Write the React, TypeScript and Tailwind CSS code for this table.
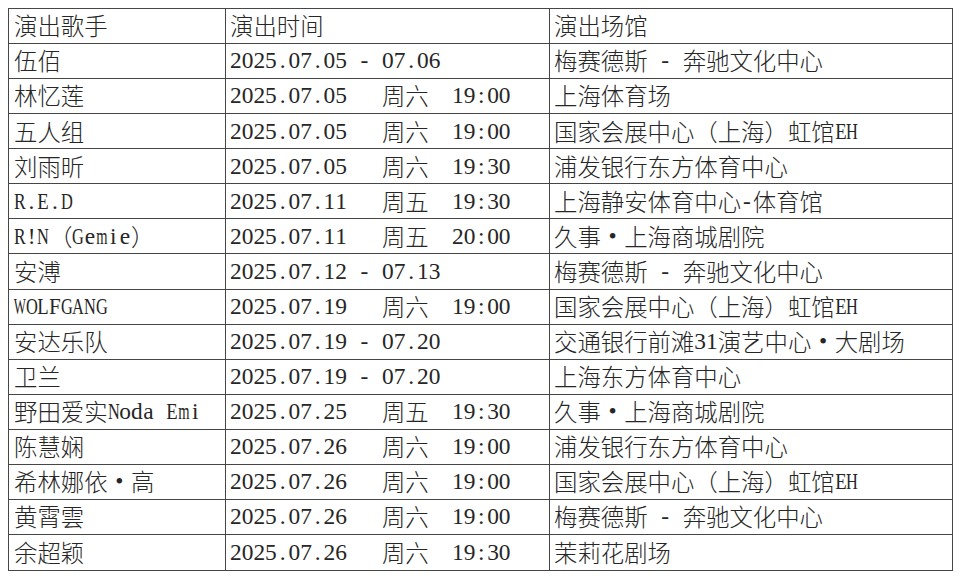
import React from 'react';

// 每行: 歌手, 时间, 场馆
const rows: [string, string, string][] = [
  ['演出歌手', '演出时间', '演出场馆'],
  ['伍佰', '2025.07.05 - 07.06', '梅赛德斯 - 奔驰文化中心'],
  ['林忆莲', '2025.07.05   周六  19:00', '上海体育场'],
  ['五人组', '2025.07.05   周六  19:00', '国家会展中心（上海）虹馆EH'],
  ['刘雨昕', '2025.07.05   周六  19:30', '浦发银行东方体育中心'],
  ['R.E.D', '2025.07.11   周五  19:30', '上海静安体育中心-体育馆'],
  ['R!N（Gemie）', '2025.07.11   周五  20:00', '久事•上海商城剧院'],
  ['安溥', '2025.07.12 - 07.13', '梅赛德斯 - 奔驰文化中心'],
  ['WOLFGANG', '2025.07.19   周六  19:00', '国家会展中心（上海）虹馆EH'],
  ['安达乐队', '2025.07.19 - 07.20', '交通银行前滩31演艺中心•大剧场'],
  ['卫兰', '2025.07.19 - 07.20', '上海东方体育中心'],
  ['野田爱实Noda Emi', '2025.07.25   周五  19:30', '久事•上海商城剧院'],
  ['陈慧娴', '2025.07.26   周六  19:00', '浦发银行东方体育中心'],
  ['希林娜依•高', '2025.07.26   周六  19:00', '国家会展中心（上海）虹馆EH'],
  ['黄霄雲', '2025.07.26   周六  19:00', '梅赛德斯 - 奔驰文化中心'],
  ['余超颖', '2025.07.26   周六  19:30', '茉莉花剧场'],
];

// 宽字母压窄, 模仿宋体的半角字
const squeeze: Record<string, string> = {
  W: 'scale-x-[0.55]',
  M: 'scale-x-[0.58]',
  m: 'scale-x-[0.62]',
  O: 'scale-x-[0.7]',
  G: 'scale-x-[0.7]',
  A: 'scale-x-[0.7]',
  N: 'scale-x-[0.7]',
  D: 'scale-x-[0.7]',
  H: 'scale-x-[0.7]',
  R: 'scale-x-[0.75]',
  L: 'scale-x-[0.8]',
  E: 'scale-x-[0.8]',
  F: 'scale-x-[0.9]',
};

const latin = "inline-flex justify-center w-[0.5em] [font-family:'Liberation_Serif',serif]";

const Txt: React.FC<{ s: string }> = ({ s }) => {
  const out: React.ReactNode[] = [];
  let buf = '';
  const flush = () => {
    if (buf) {
      out.push(
        <span key={out.length} className="[font-family:'Noto_Sans_CJK_SC',sans-serif] font-light">
          {buf}
        </span>
      );
      buf = '';
    }
  };
  for (const c of s) {
    if (c === '•') {
      flush();
      out.push(
        <span key={out.length} className="inline-flex justify-center w-[1em] [font-family:'Liberation_Serif',serif]">
          •
        </span>
      );
    } else if (c.charCodeAt(0) >= 0x2e80) {
      buf += c;
    } else {
      flush();
      out.push(
        <span key={out.length} className={latin + ' ' + (squeeze[c] || '')}>
          {c === ' ' ? '\u00a0' : c}
        </span>
      );
    }
  }
  flush();
  return <>{out}</>;
};

export default function App() {
  return (
    <div className="w-[960px] h-[580px] bg-white pt-[8px] pl-[8px]">
      <div className="w-[945px] h-[563px] border border-[#464646] grid grid-cols-[217px_324px_1fr] grid-rows-[repeat(16,minmax(0,1fr))] text-[23.4px] leading-none text-[#262626]">
        {rows.map((r, i) => {
          const last = i === rows.length - 1;
          return (
            <React.Fragment key={i}>
              <div className={`flex items-center pl-[5px] border-r border-[#464646] whitespace-nowrap ${last ? '' : 'border-b'}`}>
                <Txt s={r[0]} />
              </div>
              <div className={`flex items-center pl-[4px] border-r border-[#464646] whitespace-nowrap ${last ? '' : 'border-b'}`}>
                <Txt s={r[1]} />
              </div>
              <div className={`flex items-center pl-[4px] border-[#464646] whitespace-nowrap ${last ? '' : 'border-b'}`}>
                <Txt s={r[2]} />
              </div>
            </React.Fragment>
          );
        })}
      </div>
    </div>
  );
}
